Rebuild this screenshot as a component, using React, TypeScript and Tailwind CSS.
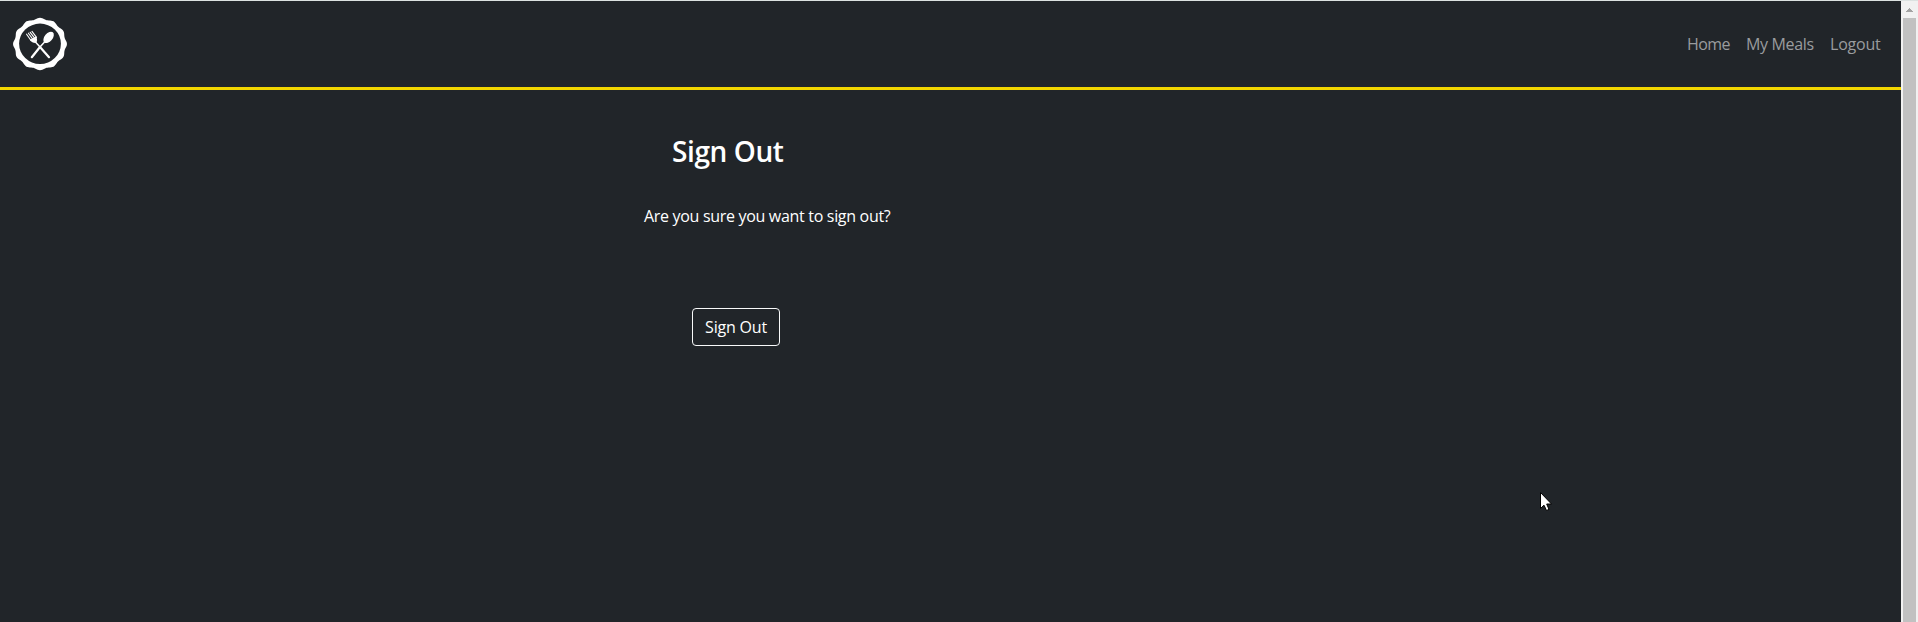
import React from "react";

const points = (() => {
  const out: string[] = [];
  for (let i = 0; i < 144; i++) {
    const a = (i / 144) * Math.PI * 2;
    const r = 26.2 + 0.75 * Math.cos(a * 12);
    out.push(`${(28 + r * Math.cos(a)).toFixed(2)},${(28 + r * Math.sin(a) * 0.97).toFixed(2)}`);
  }
  return out.join(" ");
})();

function Logo() {
  return (
    <svg className="h-14 w-14" viewBox="0 0 56 56" aria-hidden="true">
      <polygon points={points} fill="#fff" />
      <ellipse cx="28" cy="27.8" rx="20.9" ry="20.2" fill="#212529" />
      <g stroke="#fff" strokeLinecap="round" fill="none">
        <path d="M33 25.5L28 31" strokeWidth="1.5" />
        <path d="M28 31L19.8 41.2" strokeWidth="2.2" />
        <path d="M23 25.5L28 31" strokeWidth="1.5" />
        <path d="M28 31L37 41.2" strokeWidth="2.2" />
        <path d="M14.6 18.2L19 24.5M16.4 17.2L20.9 23.4M18.2 16.3L22.8 22.4M20 15.4L24.5 21.4" strokeWidth="1.1" />
      </g>
      <path d="M17.8 23.8L24.2 20.5Q26 24.8 24 27Q20.2 27.3 17.8 23.8Z" fill="#fff" />
      <ellipse cx="36.6" cy="21.4" rx="4" ry="6.6" transform="rotate(40 36.6 21.4)" fill="#fff" />
    </svg>
  );
}

export default function App() {
  return (
    <div className="relative flex h-[622px] w-full flex-col overflow-hidden bg-[#212529] font-['Open_Sans','Noto_Sans',sans-serif] text-base leading-6 text-white">
      <div className="h-px shrink-0 bg-[#dce2e1]" />
      <div className="flex min-h-0 flex-1">
        <div className="flex min-w-0 flex-1 flex-col">
          <header className="flex h-[89px] shrink-0 items-center justify-between border-b-3 border-[#f2d600] pr-5 pl-3">
            <a href="#" className="block"><Logo /></a>
            <nav className="flex gap-4 text-[#9a9c9e]">
              <a href="#" className="w-[43px] whitespace-nowrap tracking-[-0.6px]">Home</a>
              <a href="#" className="w-[68px] whitespace-nowrap tracking-[-0.35px]">My Meals</a>
              <a href="#" className="w-[51px] whitespace-nowrap tracking-[-0.2px]">Logout</a>
            </nav>
          </header>
          <main className="flex flex-1 flex-col items-start">
            <h1 className="mt-11 ml-[672px] text-[28px] leading-[34px] font-semibold tracking-[-0.4px]">Sign Out</h1>
            <p className="mt-9 ml-[644px] tracking-[-0.31px]">Are you sure you want to sign out?</p>
            <button className="mt-20 ml-[692px] flex h-[38px] w-[88px] items-center justify-center rounded border border-[#f8f9fa] tracking-[-0.2px]">Sign Out</button>
          </main>
        </div>
        <aside className="flex w-[17px] shrink-0 flex-col items-center bg-[#f1f1f1]">
          <div className="flex h-[17px] items-center justify-center">
            <svg width="7" height="4" viewBox="0 0 7 4" shapeRendering="crispEdges"><path d="M3 0h1v1h1v1h1v1h1v1H0V3h1V2h1V1h1z" fill="#a3a3a3" /></svg>
          </div>
          <div className="w-[13px] flex-1 bg-[#c1c1c1]" />
        </aside>
      </div>
      <svg className="absolute top-[492px] left-[1540px]" width="12" height="19" viewBox="0 0 12 19">
        <path d="M.5.5V16.5L4 13.2L6.5 18.5L9 17.4L6.7 12H11.5Z" fill="#fff" stroke="#000" />
      </svg>
    </div>
  );
}
